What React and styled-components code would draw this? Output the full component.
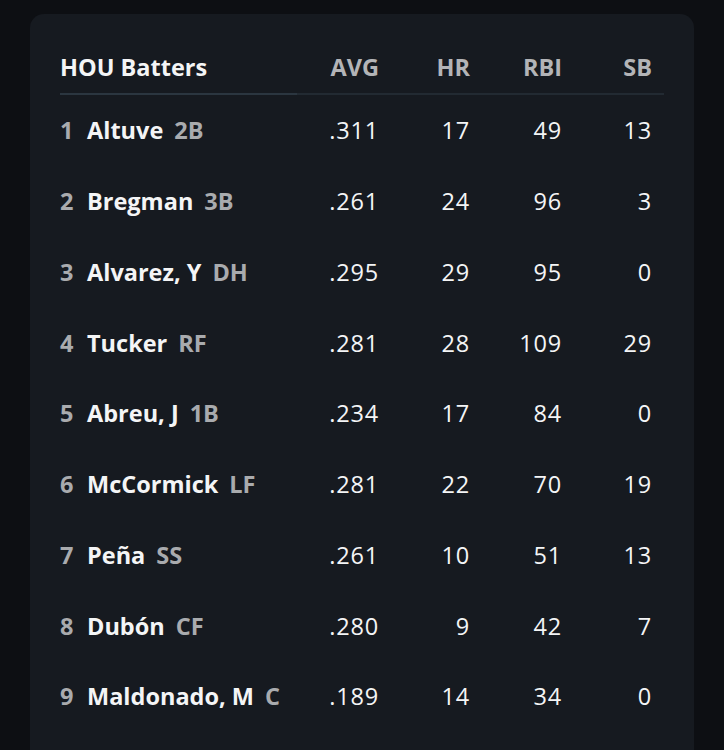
import React from "react";
import styled, { createGlobalStyle } from "styled-components";

const GlobalStyle = createGlobalStyle`
  html, body {
    margin: 0;
    padding: 0;
    background: #0d0f13;
    font-family: "Open Sans", Lato, sans-serif;
    -webkit-font-smoothing: antialiased;
  }
`;

const Page = styled.div`
  width: 724px;
  height: 750px;
  overflow: hidden;
  padding: 14px 30px 0;
  box-sizing: border-box;
`;

const Card = styled.div`
  background: #161a20;
  border-radius: 14px;
  padding: 39px 30px 40px;
  min-height: 800px;
  box-sizing: border-box;
`;

const Table = styled.div`
  display: grid;
  grid-template-columns: 237px 82px 91px 92px 102px;
`;

const HeadCell = styled.div`
  font-size: 23.5px;
  line-height: 28px;
  font-weight: 700;
  padding-bottom: 12px;
  color: ${(p) => (p.$title ? "#f4f5f6" : "#b3b4b7")};
  text-align: ${(p) => (p.$title ? "left" : "right")};
  padding-right: ${(p) => (p.$last ? "12px" : "0")};
  border-bottom: 2px solid ${(p) => (p.$title ? "#2b3640" : "#222a32")};
`;

const NameCell = styled.div`
  height: 70.75px;
  display: flex;
  align-items: center;
  font-size: 23.5px;
  font-weight: 700;
  white-space: nowrap;
`;

const Order = styled.span`
  width: 27px;
  color: #a9abae;
`;

const Player = styled.span`
  color: #f4f5f6;
  margin-right: 11px;
`;

const Pos = styled.span`
  color: #a9abae;
`;

const Stat = styled.div`
  height: 70.75px;
  display: flex;
  align-items: center;
  justify-content: flex-end;
  font-size: 23.5px;
  font-weight: 500;
  letter-spacing: 0.8px;
  color: #f4f5f6;
  padding-right: ${(p) => (p.$last ? "12px" : "0")};
`;

const batters = [
  [1, "Altuve", "2B", ".311", 17, 49, 13],
  [2, "Bregman", "3B", ".261", 24, 96, 3],
  [3, "Alvarez, Y", "DH", ".295", 29, 95, 0],
  [4, "Tucker", "RF", ".281", 28, 109, 29],
  [5, "Abreu, J", "1B", ".234", 17, 84, 0],
  [6, "McCormick", "LF", ".281", 22, 70, 19],
  [7, "Peña", "SS", ".261", 10, 51, 13],
  [8, "Dubón", "CF", ".280", 9, 42, 7],
  [9, "Maldonado, M", "C", ".189", 14, 34, 0],
];

export default function App() {
  return (
    <>
      <GlobalStyle />
      <Page>
        <Card>
          <Table>
            <HeadCell $title>HOU Batters</HeadCell>
            <HeadCell>AVG</HeadCell>
            <HeadCell>HR</HeadCell>
            <HeadCell>RBI</HeadCell>
            <HeadCell $last>SB</HeadCell>
            {batters.map(([n, name, pos, avg, hr, rbi, sb]) => (
              <React.Fragment key={n}>
                <NameCell>
                  <Order>{n}</Order>
                  <Player>{name}</Player>
                  <Pos>{pos}</Pos>
                </NameCell>
                <Stat>{avg}</Stat>
                <Stat>{hr}</Stat>
                <Stat>{rbi}</Stat>
                <Stat $last>{sb}</Stat>
              </React.Fragment>
            ))}
          </Table>
        </Card>
      </Page>
    </>
  );
}
